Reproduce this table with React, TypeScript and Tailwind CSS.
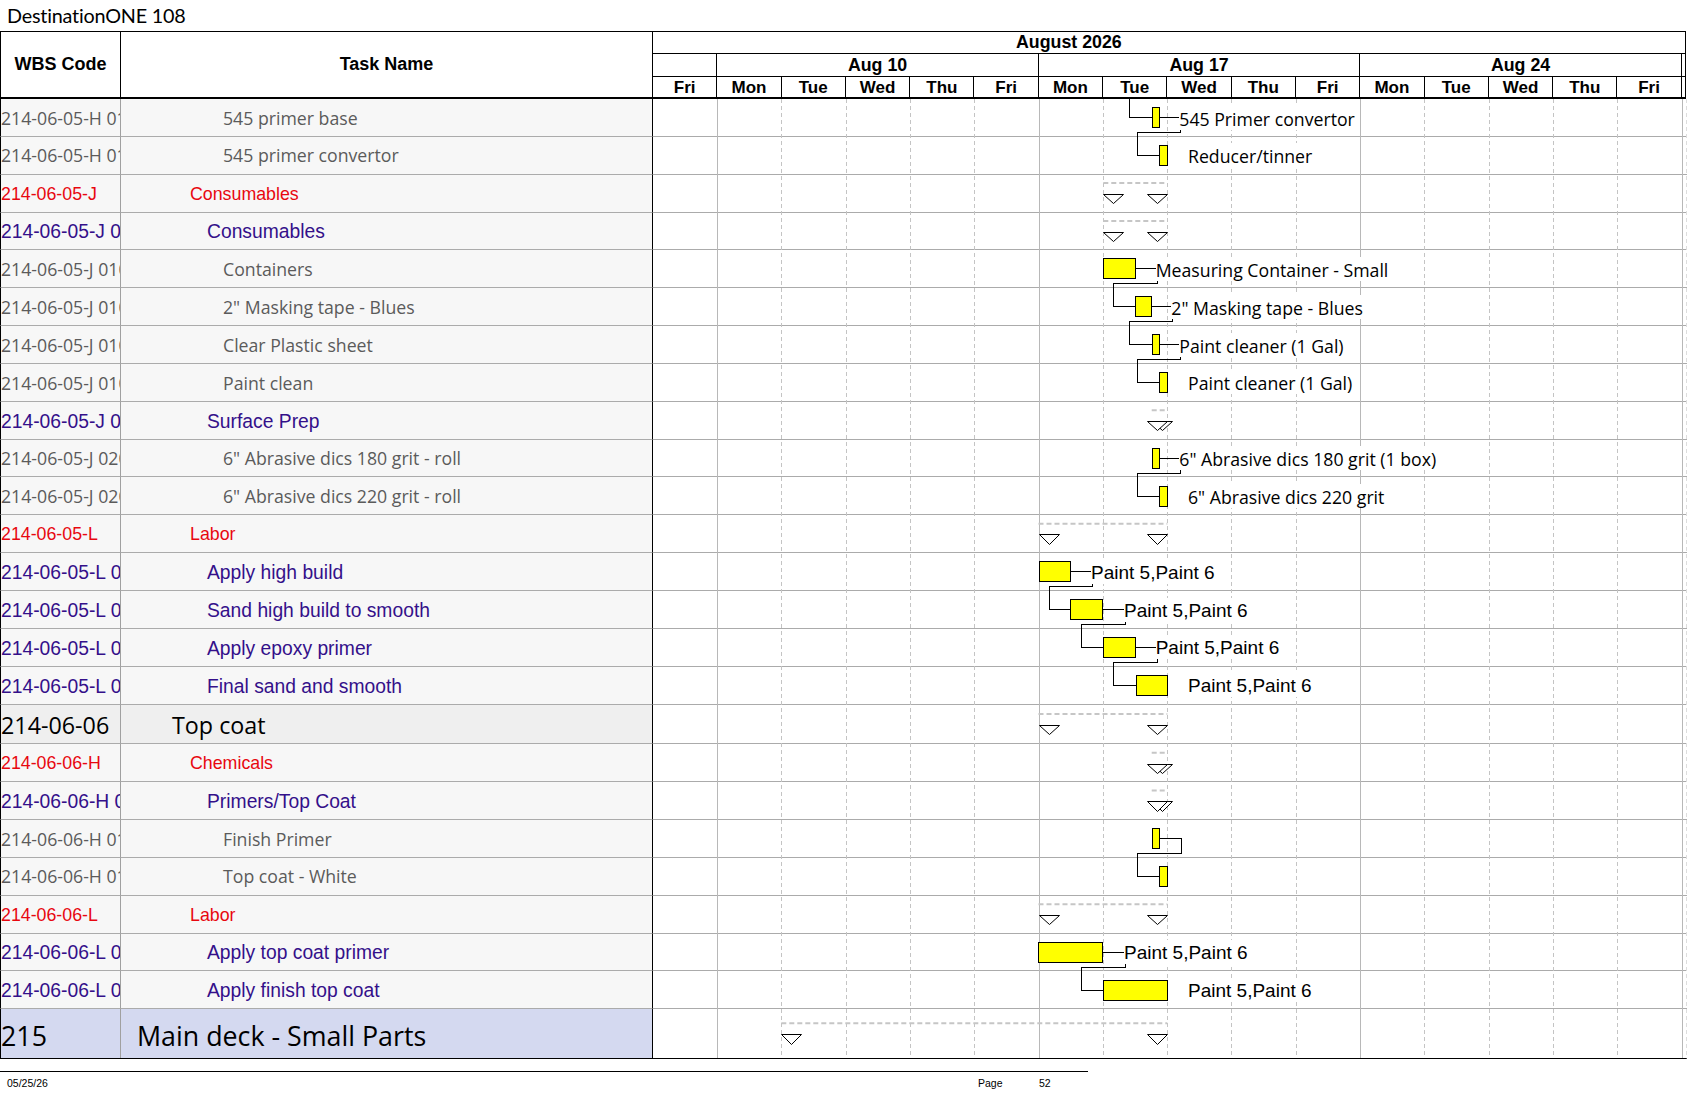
import React from 'react';

type Kind = 'item' | 'group' | 'sub' | 'top' | 'main';

interface TaskRow {
  wbs: string;
  name: string;
  kind: Kind;
}

const rows: TaskRow[] = [
  { wbs: '214-06-05-H 0101', name: '545 primer base', kind: 'item' },
  { wbs: '214-06-05-H 0102', name: '545 primer convertor', kind: 'item' },
  { wbs: '214-06-05-J', name: 'Consumables', kind: 'group' },
  { wbs: '214-06-05-J 010', name: 'Consumables', kind: 'sub' },
  { wbs: '214-06-05-J 0101', name: 'Containers', kind: 'item' },
  { wbs: '214-06-05-J 0102', name: '2" Masking tape - Blues', kind: 'item' },
  { wbs: '214-06-05-J 0103', name: 'Clear Plastic sheet', kind: 'item' },
  { wbs: '214-06-05-J 0104', name: 'Paint clean', kind: 'item' },
  { wbs: '214-06-05-J 020', name: 'Surface Prep', kind: 'sub' },
  { wbs: '214-06-05-J 0201', name: '6" Abrasive dics 180 grit - roll', kind: 'item' },
  { wbs: '214-06-05-J 0202', name: '6" Abrasive dics 220 grit - roll', kind: 'item' },
  { wbs: '214-06-05-L', name: 'Labor', kind: 'group' },
  { wbs: '214-06-05-L 010', name: 'Apply high build', kind: 'sub' },
  { wbs: '214-06-05-L 020', name: 'Sand high build to smooth', kind: 'sub' },
  { wbs: '214-06-05-L 030', name: 'Apply epoxy primer', kind: 'sub' },
  { wbs: '214-06-05-L 040', name: 'Final sand and smooth', kind: 'sub' },
  { wbs: '214-06-06', name: 'Top coat', kind: 'top' },
  { wbs: '214-06-06-H', name: 'Chemicals', kind: 'group' },
  { wbs: '214-06-06-H 010', name: 'Primers/Top Coat', kind: 'sub' },
  { wbs: '214-06-06-H 0101', name: 'Finish Primer', kind: 'item' },
  { wbs: '214-06-06-H 0102', name: 'Top coat - White', kind: 'item' },
  { wbs: '214-06-06-L', name: 'Labor', kind: 'group' },
  { wbs: '214-06-06-L 010', name: 'Apply top coat primer', kind: 'sub' },
  { wbs: '214-06-06-L 020', name: 'Apply finish top coat', kind: 'sub' },
  { wbs: '215', name: 'Main deck - Small Parts', kind: 'main' },
];

const ROW_H: Record<Kind, number> = { item: 37.85, group: 37.85, sub: 37.85, top: 39.8, main: 49 };

const rowHeight: Record<Kind, string> = {
  item: 'h-[37.85px]',
  group: 'h-[37.85px]',
  sub: 'h-[37.85px]',
  top: 'h-[39.8px]',
  main: 'h-[49px]',
};

const rowFont: Record<Kind, string> = {
  item: "font-['Open_Sans',sans-serif] text-[17.7px] text-[#5b5b5b] pt-[1px]",
  group: "font-['Liberation_Sans',Arial,sans-serif] text-[17.8px] text-[#e8070f] pt-[2px]",
  sub: "font-['Liberation_Sans',Arial,sans-serif] text-[19.3px] text-[#34108a] pt-[4px]",
  top: "font-['Open_Sans',sans-serif] text-[23.3px] text-black pt-[4px]",
  main: "font-['Open_Sans',sans-serif] text-[26.8px] text-black pt-[4px]",
};

const namePad: Record<Kind, string> = {
  item: 'pl-[102px]',
  group: 'pl-[69px]',
  sub: 'pl-[86px]',
  top: 'pl-[51px]',
  main: 'pl-[16px]',
};

const rowBg: Record<Kind, string> = {
  item: 'bg-[#f7f7f7]',
  group: 'bg-[#f7f7f7]',
  sub: 'bg-[#f7f7f7]',
  top: 'bg-[#efefef]',
  main: 'bg-[#d4d9f0]',
};

// row tops in page coordinates (body starts under the 99px header)
const rowTops: number[] = [];
{
  let y = 99;
  rows.forEach((r) => {
    rowTops.push(y);
    y += ROW_H[r.kind];
  });
}
const BODY_BOTTOM = 1058.3;

const dayX = (i: number) => 652.7 + 64.3 * i;
const px = (v: number) => Math.round(v) + 0.5;

interface Bar {
  r: number;
  x1: number;
  x2: number;
  label?: string;
  lx: number;
  arial?: boolean;
  vx?: number;
}

const bars: Bar[] = [
  { r: 0, x1: 1151.7, x2: 1158.7, label: '545 Primer convertor', lx: 1180.3, vx: 1137.3 },
  { r: 1, x1: 1159.3, x2: 1166.7, label: 'Reducer/tinner', lx: 1189 },
  { r: 4, x1: 1103.3, x2: 1134.7, label: 'Measuring Container - Small', lx: 1156.7, vx: 1113.3 },
  { r: 5, x1: 1135.3, x2: 1150.7, label: '2" Masking tape - Blues', lx: 1172.3, vx: 1129.3 },
  { r: 6, x1: 1151.7, x2: 1158.7, label: 'Paint cleaner (1 Gal)', lx: 1180.3, vx: 1137.3 },
  { r: 7, x1: 1159.3, x2: 1166.7, label: 'Paint cleaner (1 Gal)', lx: 1189 },
  { r: 9, x1: 1151.7, x2: 1158.7, label: '6" Abrasive dics 180 grit (1 box)', lx: 1180.3, vx: 1137.3 },
  { r: 10, x1: 1159.3, x2: 1166.7, label: '6" Abrasive dics 220 grit', lx: 1189 },
  { r: 12, x1: 1038.5, x2: 1070, label: 'Paint 5,Paint 6', arial: true, lx: 1092, vx: 1049.3 },
  { r: 13, x1: 1070, x2: 1102.3, label: 'Paint 5,Paint 6', arial: true, lx: 1125, vx: 1081 },
  { r: 14, x1: 1103.3, x2: 1134.7, label: 'Paint 5,Paint 6', arial: true, lx: 1156.7, vx: 1113.3 },
  { r: 15, x1: 1135.7, x2: 1166.7, label: 'Paint 5,Paint 6', arial: true, lx: 1189 },
  { r: 19, x1: 1151.7, x2: 1158.7, lx: 1180.7, vx: 1137.3 },
  { r: 20, x1: 1159.3, x2: 1166.7, lx: 1189 },
  { r: 22, x1: 1038.3, x2: 1102.3, label: 'Paint 5,Paint 6', arial: true, lx: 1125, vx: 1081 },
  { r: 23, x1: 1103.3, x2: 1166.7, label: 'Paint 5,Paint 6', arial: true, lx: 1189 },
];

const summaries = [
  { r: 2, x1: 1103.3, x2: 1167.3 },
  { r: 3, x1: 1103.3, x2: 1167.3 },
  { r: 8, x1: 1151.7, x2: 1166.7 },
  { r: 11, x1: 1038.5, x2: 1167.3 },
  { r: 16, x1: 1038.5, x2: 1167.3 },
  { r: 17, x1: 1151.7, x2: 1167.3 },
  { r: 18, x1: 1151.7, x2: 1167.3 },
  { r: 21, x1: 1038.5, x2: 1167.3 },
  { r: 24, x1: 781.3, x2: 1167.3 },
];

const barY = (r: number) => rowTops[r] + 18;
const rowMid = (r: number) => rowTops[r] + ROW_H[rows[r].kind] / 2;

const days = ['Fri', 'Mon', 'Tue', 'Wed', 'Thu', 'Fri', 'Mon', 'Tue', 'Wed', 'Thu', 'Fri', 'Mon', 'Tue', 'Wed', 'Thu', 'Fri'];

const Triangle: React.FC<{ x: number; y: number }> = ({ x, y }) => (
  <polygon
    points={`${px(x)},${px(y)} ${px(x + 20)},${px(y)} ${px(x + 10)},${px(y + 9.5)}`}
    fill="white"
    stroke="black"
    strokeWidth={1}
  />
);

const GanttDrawing: React.FC = () => (
  <svg className="absolute left-0 top-0 pointer-events-none" width={1687} height={1097}>
    {/* day grid */}
    {Array.from({ length: 16 }, (_, k) => k + 1).map((i) => {
      const mon = i === 1 || i === 6 || i === 11 || i === 16;
      return (
        <line
          key={i}
          x1={px(dayX(i))}
          x2={px(dayX(i))}
          y1={99}
          y2={BODY_BOTTOM}
          stroke={mon ? '#b8b8b8' : '#c4c4c4'}
          strokeDasharray={mon ? undefined : '4 3'}
          shapeRendering="crispEdges"
        />
      );
    })}
    <line x1={1686.5} x2={1686.5} y1={99} y2={BODY_BOTTOM} stroke="#dddddd" strokeDasharray="4 3" />

    {/* summary bars */}
    {summaries.map((s, k) => {
      const m = rowMid(s.r);
      return (
        <g key={k}>
          <line
            x1={s.x1}
            x2={s.x2}
            y1={m - 10.6}
            y2={m - 10.6}
            stroke="#c6c6c6"
            strokeWidth={2}
            strokeDasharray="5 3"
          />
          <Triangle x={s.x1} y={m + 0.2} />
          <Triangle x={s.x2 - 20} y={m + 0.2} />
        </g>
      );
    })}

    {/* link coming in from the previous page row */}
    <polyline
      points={`${px(1129.3)},99 ${px(1129.3)},${px(barY(0))} ${px(1151.7)},${px(barY(0))}`}
      fill="none"
      stroke="black"
      shapeRendering="crispEdges"
    />

    {/* links */}
    {bars.map((b, k) => {
      if (b.vx === undefined) return null;
      const next = bars.find((n) => n.r === b.r + 1);
      if (!next) return null;
      const cy = barY(b.r);
      const low = rowTops[b.r] + 33;
      const ny = barY(next.r);
      const pts = [
        [b.x2, cy],
        [b.lx, cy],
        [b.lx, low],
        [b.vx, low],
        [b.vx, ny],
        [next.x1, ny],
      ]
        .map(([x, y]) => `${px(x)},${px(y)}`)
        .join(' ');
      return <polyline key={k} points={pts} fill="none" stroke="black" shapeRendering="crispEdges" />;
    })}

    {/* task bars */}
    {bars.map((b, k) => {
      const cy = barY(b.r);
      return (
        <rect
          key={k}
          x={px(b.x1)}
          y={px(cy - 10)}
          width={Math.round(b.x2) - Math.round(b.x1)}
          height={20}
          fill="#ffff00"
          stroke="black"
          shapeRendering="crispEdges"
        />
      );
    })}
  </svg>
);

const BarLabels: React.FC = () => (
  <>
    {bars
      .filter((b) => b.label)
      .map((b, k) => (
        <div
          key={k}
          className={`absolute bg-white whitespace-nowrap text-black pr-[2px] ${
            b.arial
              ? "font-['Liberation_Sans',Arial,sans-serif] text-[19px] leading-[22px] pt-[2px]"
              : "font-['Open_Sans',sans-serif] text-[17.7px] leading-[22px] pt-[2px]"
          }`}
          style={{ left: b.lx - 1, top: barY(b.r) - 11.5 }}
        >
          {b.label}
        </div>
      ))}
  </>
);

export default function App() {
  return (
    <div className="relative w-[1687px] h-[1097px] overflow-hidden bg-white">
      {/* title */}
      <div className="h-[31px] flex items-center pl-[7px] font-['Lato',sans-serif] font-normal text-[19.8px] tracking-[-0.2px] text-black">
        DestinationONE 108
      </div>

      {/* header */}
      <div className="flex w-[1686px] h-[68px] border-t border-black font-['Liberation_Sans',Arial,sans-serif] font-bold text-black">
        <div className="w-[121px] shrink-0 flex items-center justify-center border-l border-r border-b-2 border-black text-[18px]">
          WBS Code
        </div>
        <div className="w-[532px] shrink-0 flex items-center justify-center border-r border-b-2 border-black text-[18px]">
          Task Name
        </div>
        <div className="flex-1 flex flex-col border-r border-black">
          <div className="h-[22px] shrink-0 flex items-center pl-[363px] pt-[1px] border-b border-black text-[17.8px] leading-none">
            August 2026
          </div>
          <div className="h-[23px] shrink-0 flex border-b border-black text-[17.8px] leading-none">
            <div className="w-[64.3px] shrink-0 border-r border-black" />
            {['Aug 10', 'Aug 17', 'Aug 24'].map((w) => (
              <div key={w} className="w-[321.5px] shrink-0 flex items-center justify-center pt-[2px] border-r border-black">
                {w}
              </div>
            ))}
            <div className="flex-1" />
          </div>
          <div className="h-[22px] shrink-0 flex border-b-2 border-black text-[17px] leading-none">
            {days.map((d, i) => (
              <div key={i} className="w-[64.3px] shrink-0 flex items-center justify-center pt-[1px] border-r border-black">
                {d}
              </div>
            ))}
            <div className="flex-1" />
          </div>
        </div>
      </div>

      {/* body rows */}
      <div className="flex flex-col border-b border-black">
        {rows.map((r, i) => {
          const last = i === rows.length - 1;
          const line = last ? '' : 'border-b border-b-[#ababab]';
          return (
            <div key={i} className={`flex ${rowHeight[r.kind]}`}>
              <div
                className={`w-[121px] shrink-0 flex items-center overflow-hidden whitespace-nowrap border-l border-l-black border-r border-r-[#a0a0a0] ${line} ${rowBg[r.kind]} ${rowFont[r.kind]}`}
              >
                {r.wbs}
              </div>
              <div
                className={`w-[532px] shrink-0 flex items-center whitespace-nowrap border-r border-r-black ${line} ${rowBg[r.kind]} ${rowFont[r.kind]} ${namePad[r.kind]}`}
              >
                {r.name}
              </div>
              <div className={`flex-1 bg-white ${line}`} />
            </div>
          );
        })}
      </div>

      {/* footer */}
      <div className="mt-[12px] w-[1088px] border-t border-black" />
      <div className="flex pt-[5px] font-['Liberation_Sans',Arial,sans-serif] text-[10.5px] leading-[12px] text-black">
        <span className="w-[978px] shrink-0 pl-[7px]">05/25/26</span>
        <span className="w-[61px] shrink-0">Page</span>
        <span>52</span>
      </div>

      <GanttDrawing />
      <BarLabels />
    </div>
  );
}
